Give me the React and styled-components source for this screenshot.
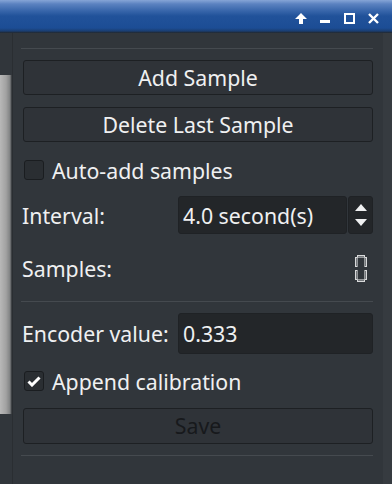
import React from 'react';
import styled, { createGlobalStyle } from 'styled-components';

const GlobalStyle = createGlobalStyle`
  html, body {
    margin: 0;
    padding: 0;
    background: #31363b;
  }
  body {
    font-family: 'Noto Sans', 'DejaVu Sans', sans-serif;
  }
`;

const Window = styled.div`
  display: flex;
  flex-direction: column;
  width: 392px;
  height: 484px;
  overflow: hidden;
  background: #31363b;
`;

const TitleBar = styled.div`
  display: flex;
  justify-content: flex-end;
  align-items: center;
  height: 33px;
  padding-right: 7px;
  box-sizing: border-box;
  background: linear-gradient(
    to bottom,
    #86a5d6 0px,
    #5b82c0 4px,
    #3c69ad 10px,
    #21529a 16px,
    #1c4d95 28px,
    #1a3e72 31px,
    #23272b 33px
  );
`;

const TitleButton = styled.div`
  display: flex;
  justify-content: center;
  align-items: center;
  width: 24px;
  height: 20px;
  margin-top: 3px;
`;

const Body = styled.div`
  display: flex;
  flex: 1;
  min-height: 0;
`;

const Strip = styled.div`
  width: 12px;
  margin-top: 42px;
  margin-bottom: 70px;
  background: linear-gradient(
    to right,
    #b8b8b8 0px,
    #a2a2a2 6px,
    #808283 10px,
    #2a2e32 12px
  );
  filter: blur(0.6px);
`;

const Panel = styled.div`
  display: flex;
  flex-direction: column;
  flex: 1;
  padding: 15px 10px 0 10px;
  border-left: 1px solid #2a2e32;
  color: #eff0f1;
  font-size: 21.3px;
`;

const RightEdge = styled.div`
  width: 9px;
  background: #363b40;
`;

const Separator = styled.div`
  height: 1px;
  margin-left: -2px;
  margin-top: ${(p) => p.$top || 0}px;
  background: #454a4f;
`;

const Button = styled.div`
  display: flex;
  justify-content: center;
  align-items: center;
  height: ${(p) => p.$h || 35}px;
  margin-top: ${(p) => p.$top || 0}px;
  box-sizing: border-box;
  border: 1px solid #1d2023;
  border-radius: 3px;
  background: #2f3338;
  color: ${(p) => (p.$disabled ? '#17191c' : '#eff0f1')};
  line-height: 1;
`;

const CheckRow = styled.div`
  display: flex;
  align-items: center;
  gap: 8px;
  height: 20px;
  margin-top: ${(p) => p.$top || 0}px;
  padding-left: 1px;
`;

const Box = styled.div`
  display: flex;
  justify-content: center;
  align-items: center;
  width: 20px;
  height: 20px;
  box-sizing: border-box;
  border: 1px solid #1a1d20;
  border-radius: 3px;
  background: #2a2e32;
`;

const FieldRow = styled.div`
  display: flex;
  align-items: center;
  height: ${(p) => p.$h}px;
  margin-top: ${(p) => p.$top || 0}px;
`;

const Label = styled.div`
  width: 156px;
  margin-left: -1px;
  flex: ${(p) => (p.$grow ? 1 : 'none')};
`;

const Input = styled.div`
  display: flex;
  align-items: center;
  flex: 1;
  height: 100%;
  box-sizing: border-box;
  padding-left: 4px;
  border: 1px solid #1f2225;
  border-radius: 3px;
  background: #232629;
`;

const Spin = styled.div`
  display: flex;
  flex-direction: column;
  justify-content: space-evenly;
  align-items: center;
  width: 25px;
  height: 100%;
  margin-left: 1px;
  box-sizing: border-box;
  border: 1px solid #1f2225;
  border-radius: 3px;
  background: #232629;
`;

const Lcd = styled.svg`
  margin-right: 6px;
`;

const Arrow = ({ up }) => (
  <svg width="12" height="7" viewBox="0 0 12 7">
    <polygon points={up ? '6,0 12,7 0,7' : '0,0 12,0 6,7'} fill="#eff0f1" />
  </svg>
);

const LcdZero = () => (
  <Lcd width="12" height="27" viewBox="0 0 12 27">
    <g fill="none" stroke="#d8d9da" strokeWidth="1">
      <rect x="2.5" y="0.5" width="7" height="1.6" />
      <rect x="0.5" y="2.5" width="1.6" height="9" />
      <rect x="9.9" y="2.5" width="1.6" height="9" />
      <rect x="0.5" y="15.5" width="1.6" height="9" />
      <rect x="9.9" y="15.5" width="1.6" height="9" />
      <rect x="2.5" y="24.9" width="7" height="1.6" />
    </g>
  </Lcd>
);

const App = () => (
  <>
    <GlobalStyle />
    <Window>
      <TitleBar>
        <TitleButton>
          <svg width="12" height="11" viewBox="0 0 12 11">
            <polygon points="6,0 12,6 8,6 8,11 4,11 4,6 0,6" fill="#fff" />
          </svg>
        </TitleButton>
        <TitleButton>
          <svg width="10" height="11" viewBox="0 0 10 11">
            <rect x="0" y="7" width="10" height="3" fill="#fff" />
          </svg>
        </TitleButton>
        <TitleButton>
          <svg width="11" height="11" viewBox="0 0 11 11">
            <rect x="1" y="1" width="9" height="9" fill="none" stroke="#fff" strokeWidth="2" />
          </svg>
        </TitleButton>
        <TitleButton>
          <svg width="11" height="11" viewBox="0 0 11 11">
            <path d="M1 1 L10 10 M10 1 L1 10" stroke="#fff" strokeWidth="2.4" />
          </svg>
        </TitleButton>
      </TitleBar>
      <Body>
        <Strip />
        <Panel>
          <Separator />
          <Button $top={11}>Add Sample</Button>
          <Button $top={12}>Delete Last Sample</Button>
          <CheckRow $top={18}>
            <Box />
            <span>Auto-add samples</span>
          </CheckRow>
          <FieldRow $h={38} $top={16}>
            <Label>Interval:</Label>
            <Input>4.0 second(s)</Input>
            <Spin>
              <Arrow up />
              <Arrow />
            </Spin>
          </FieldRow>
          <FieldRow $h={27} $top={21}>
            <Label $grow>Samples:</Label>
            <LcdZero />
          </FieldRow>
          <Separator $top={19} />
          <FieldRow $h={41} $top={11}>
            <Label>Encoder value:</Label>
            <Input>0.333</Input>
          </FieldRow>
          <CheckRow $top={17}>
            <Box>
              <svg width="14" height="11" viewBox="0 0 14 11">
                <path d="M1.5 5.5 L5 9 L12.5 1.5" fill="none" stroke="#fff" strokeWidth="3" />
              </svg>
            </Box>
            <span>Append calibration</span>
          </CheckRow>
          <Button $top={17} $h={36} $disabled>
            Save
          </Button>
          <Separator $top={11} />
        </Panel>
        <RightEdge />
      </Body>
    </Window>
  </>
);

export default App;
